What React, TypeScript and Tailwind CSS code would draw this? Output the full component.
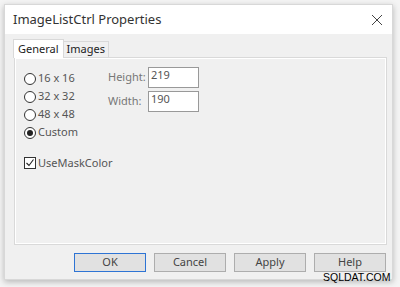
export default function App() {
  const font = { fontFamily: '"Segoe UI", "Noto Sans", "Open Sans", sans-serif' };
  const radios = [
    { label: "16 x 16", on: false },
    { label: "32 x 32", on: false },
    { label: "48 x 48", on: false },
    { label: "Custom", on: true },
  ];
  return (
    <div className="relative w-[400px] h-[287px] bg-[#f4f4f4] pt-[4px] pl-[4px]" style={font}>
      <div className="w-[389px] h-[276px] bg-[#f0f0f0] flex flex-col shadow-[0_2px_6px_rgba(0,0,0,0.25)] border border-[#d8d8d8]">
        <div className="h-[29px] bg-white flex items-center justify-between pl-[8px] pr-[9px] shrink-0">
          <span className="text-[13px] text-[#333]">ImageListCtrl Properties</span>
          <svg width="12" height="12" viewBox="0 0 12 12" className="mt-[1px]">
            <path d="M1 1 L11 11 M11 1 L1 11" stroke="#444" strokeWidth="1" />
          </svg>
        </div>
        <div className="flex-1 flex flex-col px-[8px] pt-[4px]">
          <div className="flex items-end h-[19px] text-[11px] text-[#222]">
            <div className="h-[19px] px-[4px] bg-white border border-b-0 border-[#d9d9d9] flex items-center relative z-10 -mb-px">General</div>
            <div className="h-[16px] px-[3px] bg-[#f0f0f0] border border-l-0 border-b-0 border-[#d9d9d9] flex items-center">Images</div>
          </div>
          <div className="ml-[1px] w-[373px] h-[188px] border border-[#d9d9d9] bg-[#f0f0f0] shrink-0 relative">
            <div className="absolute inset-0 border border-white pointer-events-none" />
            <div className="flex pt-[14px] pl-[9px]">
              <div className="flex flex-col gap-[5px] w-[84px] text-[11px] text-[#555]">
                {radios.map((r) => (
                  <div key={r.label} className="flex items-center h-[13px]">
                    <span className="w-[12px] h-[12px] rounded-full border border-[#333] bg-white flex items-center justify-center mr-[2px]">
                      {r.on && <span className="w-[6px] h-[6px] rounded-full bg-[#222]" />}
                    </span>
                    <span>{r.label}</span>
                  </div>
                ))}
              </div>
              <div className="flex flex-col gap-[3px] -mt-[5px] text-[11px] text-[#777]">
                <div className="flex items-center">
                  <span className="w-[40px] -mt-[1px]">Height:</span>
                  <div className="w-[51px] h-[21px] bg-white border border-[#999] pl-[2px] text-[#555] leading-[14px]">219</div>
                </div>
                <div className="flex items-center">
                  <span className="w-[40px] -mt-[1px]">Width:</span>
                  <div className="w-[51px] h-[21px] bg-white border border-[#999] pl-[2px] text-[#555] leading-[14px]">190</div>
                </div>
              </div>
            </div>
            <div className="flex items-center mt-[16px] ml-[9px] text-[11px] text-[#555]">
              <span className="w-[12px] h-[12px] border border-[#333] bg-white flex items-center justify-center mr-[2px]">
                <svg width="10" height="10" viewBox="0 0 10 10">
                  <path d="M1.5 5 L4 7.5 L8.5 1.5" stroke="#222" strokeWidth="1.1" fill="none" />
                </svg>
              </span>
              <span>UseMaskColor</span>
            </div>
          </div>
          <div className="flex justify-end gap-[8px] mt-[8px] -mr-[2px] text-[11px] text-[#444]">
            <div className="w-[72px] h-[19px] bg-[#e1e1e1] border border-[#2e74d4] flex items-center justify-center">OK</div>
            <div className="w-[72px] h-[19px] bg-[#e1e1e1] border border-[#adadad] flex items-center justify-center">Cancel</div>
            <div className="w-[72px] h-[19px] bg-[#e1e1e1] border border-[#adadad] flex items-center justify-center">Apply</div>
            <div className="w-[72px] h-[19px] bg-[#e1e1e1] border border-[#adadad] flex items-center justify-center">Help</div>
          </div>
        </div>
      </div>
      <div className="absolute left-[323px] top-[271px] text-[10.5px] leading-[12px] text-black" style={{ fontFamily: '"Liberation Sans", Arial, sans-serif' }}>SQLDAT.COM</div>
    </div>
  );
}
